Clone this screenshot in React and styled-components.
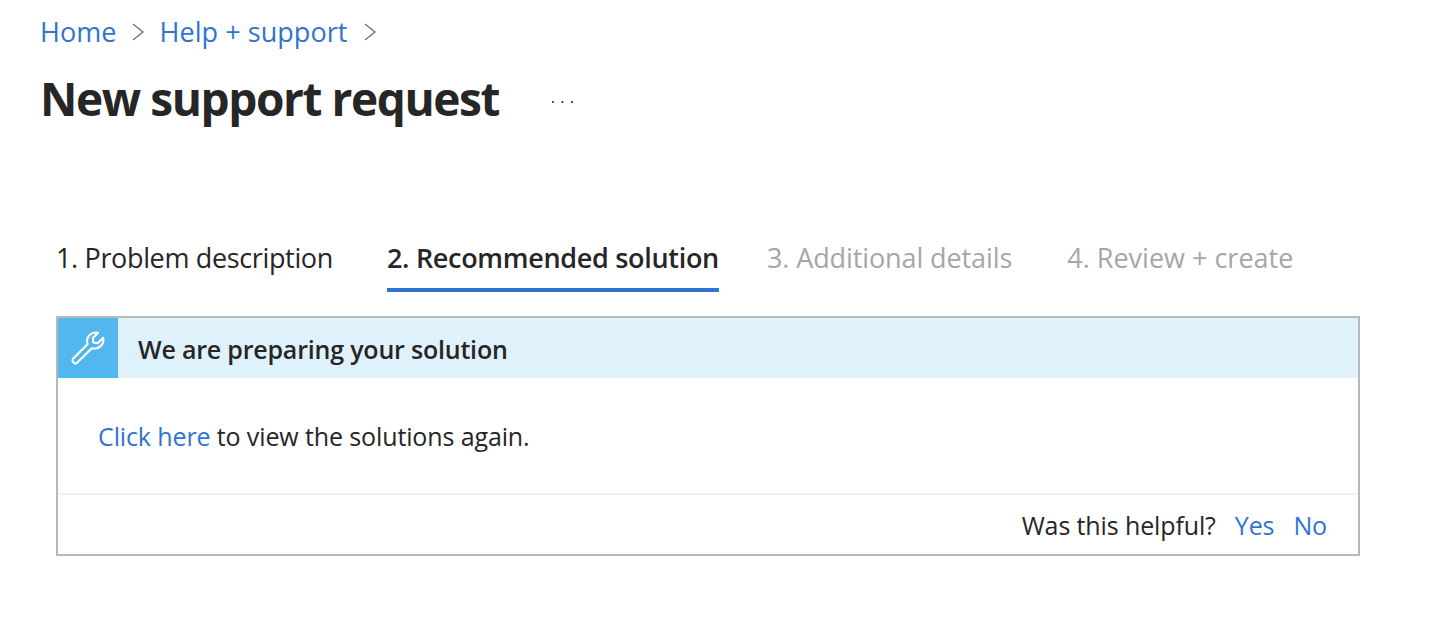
import React from "react";
import styled, { createGlobalStyle } from "styled-components";

const Global = createGlobalStyle`
  html, body { margin: 0; padding: 0; background: #fff; }
  body { font-family: "Open Sans", "Noto Sans", "Liberation Sans", sans-serif; color: #262626; }
`;
const Page = styled.div`
  width: 1446px; height: 644px; box-sizing: border-box; overflow: hidden;
  padding: 13px 0 0 40px;
`;
const Crumbs = styled.nav`
  display: flex; align-items: center; height: 38px;
`;
const Crumb = styled.a`
  color: #2f74d0; font-size: 27px; letter-spacing: 0.05px; line-height: 38px;
`;
const Chevron = styled.svg`
  width: 14px; height: 22px; margin: 0 15px 0 ${p => p.$left}px;
  fill: none; stroke: #6e6e6e; stroke-width: 1.3;
`;
const TitleRow = styled.div`
  display: flex; align-items: center; height: 64px; margin-top: 15px;
`;
const Title = styled.h1`
  margin: 0; font-size: 46px; font-weight: 700; line-height: 64px; color: #262626; letter-spacing: -1.41px;
`;
const More = styled.svg`
  width: 26px; height: 6px; margin-left: 51px; margin-top: 7px; fill: #333;
`;
const Tabs = styled.div`
  display: flex; margin: 105px 0 0 16px; height: 57px;
`;
const Tab = styled.div`
  box-sizing: border-box; height: 57px; margin-right: ${p => p.$gap}px;
  font-size: 27px; line-height: 46px; letter-spacing: ${p => p.$track}px; white-space: nowrap;
  color: ${p => p.$disabled ? "#a6a6a6" : "#262626"};
  font-weight: ${p => p.$active ? 600 : 400};
  border-bottom: 4px solid ${p => p.$active ? "#2f74d0" : "transparent"};
`;
const Panel = styled.section`
  box-sizing: border-box; width: 1304px; height: 240px; margin: 24px 0 0 16px;
  border: 2px solid #b9b9b9; display: flex; flex-direction: column;
`;
const Banner = styled.header`
  display: flex; align-items: center; height: 60px; background: #dff2fc; flex: none;
`;
const IconTile = styled.div`
  width: 60px; height: 60px; background: #52b7ee; display: flex; align-items: center; justify-content: center;
`;
const BannerText = styled.h2`
  margin: 2px 0 0 20px; font-size: 25px; font-weight: 600; letter-spacing: -0.2px; color: #262626;
`;
const Body = styled.div`
  flex: 1; display: flex; align-items: center; padding: 0 40px; font-size: 25px; letter-spacing: -0.12px;
`;
const Link = styled.a`
  color: #2f74d0; margin: ${p => p.$margin || 0};
`;
const Footer = styled.footer`
  height: 61px; flex: none; border-top: 2px solid #f1f1f1; display: flex; align-items: center; justify-content: flex-end;
  padding: 1px 31px 0 0; box-sizing: border-box; font-size: 25px; letter-spacing: -0.12px;
`;

export default function App() {
  return (
    <Page>
      <Global />
      <Crumbs>
        <Crumb>Home</Crumb>
        <Chevron $left={14} viewBox="0 0 14 22"><path d="M2 3l10 8-10 8" /></Chevron>
        <Crumb>Help + support</Crumb>
        <Chevron $left={16} viewBox="0 0 14 22"><path d="M2 3l10 8-10 8" /></Chevron>
      </Crumbs>
      <TitleRow>
        <Title>New support request</Title>
        <More viewBox="0 0 26 6"><circle cx="3" cy="3" r="1.1" /><circle cx="12.5" cy="3" r="1.1" /><circle cx="22" cy="3" r="1.1" /></More>
      </TitleRow>
      <Tabs>
        <Tab $gap={54} $track={-0.35}>1. Problem description</Tab>
        <Tab $gap={48} $track={-0.31} $active>2. Recommended solution</Tab>
        <Tab $gap={55} $track={-0.1} $disabled>3. Additional details</Tab>
        <Tab $gap={0} $track={0} $disabled>4. Review + create</Tab>
      </Tabs>
      <Panel>
        <Banner>
          <IconTile>
            <svg width="38" height="38" viewBox="0 0 36 36" fill="none" stroke="#fff" strokeWidth="2" strokeLinejoin="round">
              <path d="M4.2 27.8 L17.6 14.4 C16.4 10.6 17.6 6.8 21 4.6 C23.4 3.2 25.6 3 27.6 3.6 L22.6 8.6 L23 12.8 L27.2 13.4 L32.2 8.4 C33 11 32.4 14 30 16.2 C27.4 18.6 24.4 19 21.6 18.2 L8.2 31.6 C7 32.8 5.2 32.8 4.2 31.8 C3.1 30.7 3.1 28.9 4.2 27.8 Z" />
            </svg>
          </IconTile>
          <BannerText>We are preparing your solution</BannerText>
        </Banner>
        <Body><span><Link>Click here</Link> to view the solutions again.</span></Body>
        <Footer>
          <span>Was this helpful?</span>
          <Link $margin="0 0 0 19px">Yes</Link>
          <Link $margin="0 0 0 19px">No</Link>
        </Footer>
      </Panel>
    </Page>
  );
}
